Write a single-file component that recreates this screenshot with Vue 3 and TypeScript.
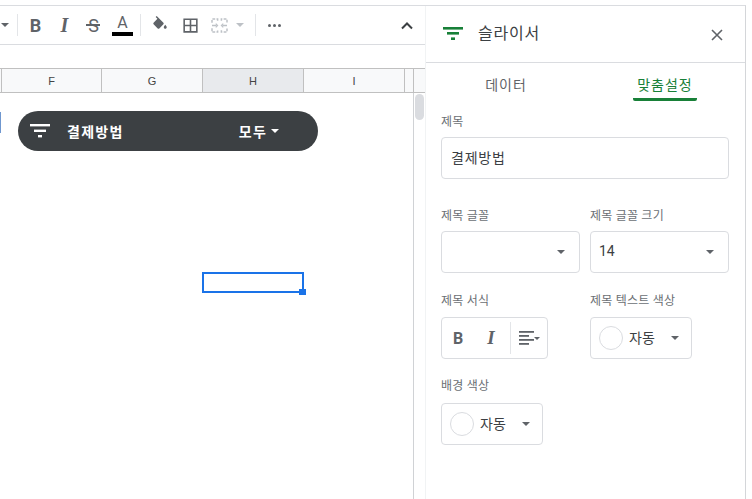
<script setup lang="ts">
const columns = [
  { name: 'F', width: 100, active: false },
  { name: 'G', width: 101, active: false },
  { name: 'H', width: 101, active: true },
  { name: 'I', width: 101, active: false },
]
const bucket =
  'M16.56 8.94 7.62 0 6.21 1.41l2.38 2.38-5.15 5.15c-.59.59-.59 1.54 0 2.12l5.5 5.5c.29.29.68.44 1.06.44s.77-.15 1.06-.44l5.5-5.5c.59-.58.59-1.53 0-2.11zM19 11.5s-2 2.17-2 3.5c0 1.1.9 2 2 2s2-.9 2-2c0-1.33-2-3.5-2-3.5z'
const grid4 = 'M3 3v18h18V3H3zm8 16H5v-6h6v6zm0-8H5V5h6v6zm8 8h-6v-6h6v6zm0-8h-6V5h6v6z'
</script>

<template>
  <div class="page">
    <div class="sheet">
      <div class="toolbar">
        <span class="caret first"></span>
        <span class="sep first-sep"></span>
        <span class="tool tool-b">B</span>
        <span class="tool tool-i">I</span>
        <span class="tool tool-s">S</span>
        <span class="tool tool-a"><span>A</span><i class="a-bar"></i></span>
        <span class="sep"></span>
        <span class="tool wide">
          <svg width="18" height="18" viewBox="0 0 24 24"><path :d="bucket" fill="#5f6368" /></svg>
        </span>
        <span class="tool wide">
          <svg width="19" height="19" viewBox="0 0 24 24"><path :d="grid4" fill="#5f6368" /></svg>
        </span>
        <span class="tool">
          <svg width="17" height="15" viewBox="0 0 18 16" fill="none" stroke="#bdc1c6" stroke-width="1.6">
            <path d="M1 5V1h6v2M11 3V1h6v4M1 11v4h6v-2M11 13v2h6v-4" stroke-dasharray="3 1.4" />
            <path d="M1 8h5M17 8h-5" />
            <path d="M5 6l2 2-2 2M13 6l-2 2 2 2" stroke-width="1.2" />
          </svg>
        </span>
        <span class="caret light"></span>
        <span class="sep merge-sep"></span>
        <span class="dots"><i></i><i></i><i></i></span>
        <svg class="chevron" width="14" height="9" viewBox="0 0 14 9" fill="none" stroke="#3c4043" stroke-width="2">
          <path d="M2 7.5 7 2.5l5 5" />
        </svg>
      </div>
      <div class="formula"></div>
      <div class="col-header">
        <span class="corner"></span>
        <span
          v-for="col in columns"
          :key="col.name"
          class="col"
          :class="{ active: col.active }"
          :style="{ width: col.width + 'px' }"
        >{{ col.name }}</span>
        <span class="col stub"></span>
      </div>
      <div class="body">
        <div class="cells">
          <i class="row-mark"></i>
          <div class="slicer">
            <svg width="20" height="14" viewBox="0 0 20 14" fill="#fff">
              <rect x="0" y="0" width="20" height="2.4" />
              <rect x="4" y="5.6" width="12" height="2.4" />
              <rect x="8" y="11" width="4" height="2.4" />
            </svg>
            <span class="slicer-title">결제방법</span>
            <span class="slicer-value">모두</span>
            <span class="caret white"></span>
          </div>
          <div class="selection"><i class="handle"></i></div>
        </div>
        <div class="scroll"><i class="thumb"></i></div>
      </div>
    </div>

    <aside class="panel">
      <header class="panel-head">
        <svg width="20" height="13" viewBox="0 0 20 13" fill="#188038">
          <rect x="0" y="0" width="20" height="2.6" />
          <rect x="4" y="5" width="12" height="2.6" />
          <rect x="8" y="10.4" width="4" height="2.6" />
        </svg>
        <span class="panel-title">슬라이서</span>
        <svg class="close" width="12" height="12" viewBox="0 0 12 12" stroke="#5f6368" stroke-width="1.6">
          <path d="M1 1l10 10M11 1 1 11" />
        </svg>
      </header>
      <nav class="tabs">
        <span class="tab">데이터</span>
        <span class="tab on">맞춤설정</span>
      </nav>
      <div class="form">
        <label class="lbl row-1">제목</label>
        <div class="field text-field"><span class="raised">결제방법</span></div>

        <div class="two row-2">
          <div>
            <label class="lbl">제목 글꼴</label>
            <div class="field select"><span></span><i class="caret"></i></div>
          </div>
          <div>
            <label class="lbl">제목 글꼴 크기</label>
            <div class="field select"><span class="num raised">14</span><i class="caret"></i></div>
          </div>
        </div>

        <div class="two row-3">
          <div>
            <label class="lbl">제목 서식</label>
            <div class="field fmt">
              <span class="fmt-b">B</span>
              <span class="fmt-i">I</span>
              <span class="fmt-sep"></span>
              <svg width="15" height="14" viewBox="0 0 15 14" fill="#5f6368">
                <rect x="0" y="0" width="15" height="1.8" />
                <rect x="0" y="4" width="10" height="1.8" />
                <rect x="0" y="8" width="15" height="1.8" />
                <rect x="0" y="12" width="10" height="1.8" />
              </svg>
              <i class="caret small"></i>
            </div>
          </div>
          <div>
            <label class="lbl">제목 텍스트 색상</label>
            <div class="field color">
              <span class="swatch"></span><span class="auto">자동</span><i class="caret"></i>
            </div>
          </div>
        </div>

        <label class="lbl row-4">배경 색상</label>
        <div class="field color">
          <span class="swatch"></span><span class="auto">자동</span><i class="caret"></i>
        </div>
      </div>
    </aside>
  </div>
</template>

<style>
html,
body {
  margin: 0;
  height: 499px;
  overflow: hidden;
  background: #fff;
}
</style>

<style scoped>
.page {
  display: flex;
  height: 494px;
  width: 746px;
  margin-top: 5px;
  border-top: 1px solid #dadce0;
  box-sizing: border-box;
  border-right: 1px solid #d4d6d9;
  font-family: 'Noto Sans CJK KR', 'Liberation Sans', sans-serif;
  color: #3c4043;
}
.sheet {
  width: 425px;
  flex: none;
  display: flex;
  flex-direction: column;
}
.toolbar {
  height: 38px;
  flex: none;
  display: flex;
  align-items: center;
  border-bottom: 1px solid #dadce0;
}
.caret {
  display: block;
  width: 0;
  height: 0;
  border-left: 4px solid transparent;
  border-right: 4px solid transparent;
  border-top: 4px solid #5f6368;
  flex: none;
}
.caret.first {
  margin-left: 1px;
}
.caret.light {
  margin-left: 2px;
  border-top-color: #bdc1c6;
}
.caret.white {
  border-top-color: #fff;
  margin-left: 4px;
}
.sep {
  width: 1px;
  height: 22px;
  background: #e3e5e8;
  margin: 0 4px 0 3px;
  flex: none;
}
.first-sep {
  margin: 0 3px 0 8px;
}
.merge-sep {
  margin-left: 11px;
}
.tool {
  width: 29px;
  height: 28px;
  display: flex;
  align-items: center;
  justify-content: center;
  flex: none;
  color: #5f6368;
  font: 700 18px 'Roboto', sans-serif;
}
.tool.wide {
  width: 30px;
}
.tool-i {
  font: italic 700 20px 'Liberation Serif', serif;
}
.tool-s {
  position: relative;
  font-weight: 400;
}
.tool-s::after {
  content: '';
  position: absolute;
  left: 7px;
  right: 8px;
  top: 13px;
  height: 2px;
  background: #5f6368;
}
.tool-a {
  flex-direction: column;
  font-weight: 400;
  font-size: 16px;
  line-height: 17px;
}
.a-bar {
  display: block;
  width: 21px;
  height: 4px;
  background: #000;
  margin-top: 1px;
}
.dots {
  display: flex;
  gap: 2px;
  margin-left: 8px;
}
.dots i {
  width: 3px;
  height: 3px;
  border-radius: 50%;
  background: #5f6368;
}
.chevron {
  margin-left: auto;
  margin-right: 11px;
}
.formula {
  height: 23px;
  flex: none;
}
.col-header {
  height: 25px;
  flex: none;
  box-sizing: border-box;
  display: flex;
  background: #f8f9fa;
  border-top: 1px solid #c0c0c0;
  border-bottom: 1px solid #c0c0c0;
}
.corner {
  width: 1px;
  flex: none;
}
.col {
  box-sizing: border-box;
  flex: none;
  display: flex;
  align-items: center;
  justify-content: center;
  border-left: 1px solid #c0c0c0;
  font: 11px 'Liberation Sans', sans-serif;
  color: #444;
}
.col.active {
  background: #e8eaed;
}
.col.stub {
  width: 10px;
  border-right: 1px solid #c0c0c0;
}
.body {
  flex: 1;
  display: flex;
  min-height: 0;
}
.cells {
  position: relative;
  width: 414px;
  box-sizing: border-box;
  border-right: 1px solid #d0d2d5;
}
.row-mark {
  position: absolute;
  left: 0;
  top: 19px;
  width: 1px;
  height: 21px;
  background: #6f97cf;
}
.slicer {
  position: absolute;
  left: 18px;
  top: 18px;
  width: 300px;
  height: 40px;
  box-sizing: border-box;
  padding-left: 12px;
  border-radius: 20px;
  background: #3c4043;
  display: flex;
  align-items: center;
  color: #fff;
  font-size: 14px;
  letter-spacing: 1.3px;
  font-weight: 700;
}
.slicer-title {
  margin-left: 17px;
}
.slicer-value {
  margin-left: 115px;
}
.selection {
  position: absolute;
  left: 202px;
  top: 179px;
  width: 102px;
  height: 21px;
  box-sizing: border-box;
  border: 2px solid #1a73e8;
}
.handle {
  position: absolute;
  right: -4px;
  bottom: -4px;
  width: 7px;
  height: 6px;
  background: #1a73e8;
}
.scroll {
  flex: 1;
  padding: 1px 1px 0 1px;
}
.thumb {
  display: block;
  width: 9px;
  height: 26px;
  border-radius: 5px;
  background: #dadce0;
}
.panel {
  flex: 1;
  box-sizing: border-box;
  border-left: 1px solid #f1f3f4;
  display: flex;
  flex-direction: column;
  min-width: 0;
}
.panel-head {
  height: 57px;
  flex: none;
  box-sizing: border-box;
  display: flex;
  align-items: center;
  padding: 0 22px 2px 17px;
  border-bottom: 1px solid #dadce0;
}
.panel-title {
  margin: -2px 0 0 15px;
  font-size: 16px;
  letter-spacing: 0.8px;
  color: #3c4043;
}
.close {
  margin-left: auto;
  margin-top: 3px;
}
.tabs {
  display: flex;
  height: 41px;
  flex: none;
  padding: 0 48px 0 15px;
  justify-content: space-between;
}
.tab {
  width: 64px;
  margin-left: 33px;
  box-sizing: border-box;
  text-align: center;
  padding-top: 11px;
  font-size: 14px;
  letter-spacing: 1px;
  line-height: 20px;
  color: #5f6368;
}
.tab.on {
  color: #188038;
  border-bottom: 3px solid #188038;
  border-radius: 0 0 2px 2px;
  height: 38px;
}
.form {
  padding: 0 16px 0 15px;
}
.lbl {
  display: block;
  font-size: 12px;
  letter-spacing: 0.3px;
  line-height: 18px;
  color: #6b6f74;
  margin: 0 0 7px;
}
.row-1 {
  margin: 8px 0 7px;
}
.row-2 {
  margin-top: 27px;
}
.row-3 {
  margin-top: 18px;
}
.row-3 .lbl {
  margin-bottom: 8px;
}
.row-4 {
  margin: 17px 0 9px;
}
.two {
  display: grid;
  grid-template-columns: 139px 139px;
  column-gap: 10px;
}
.field {
  box-sizing: border-box;
  height: 42px;
  border: 1px solid #dadce0;
  border-radius: 4px;
  display: flex;
  align-items: center;
  font-size: 14px;
  color: #3c4043;
  background: #fff;
}
.raised {
  padding-bottom: 2px;
}
.text-field {
  padding-left: 9px;
  letter-spacing: 0.8px;
}
.select {
  padding: 0 14px 0 8px;
  justify-content: space-between;
}
.num {
  font-family: 'Roboto', sans-serif;
}
.fmt {
  width: 107px;
  padding-left: 11px;
  color: #5f6368;
}
.fmt-b {
  font: 700 16px 'Roboto', sans-serif;
}
.fmt-i {
  font: italic 700 19px 'Liberation Serif', serif;
  margin-left: 24px;
}
.fmt-sep {
  width: 1px;
  height: 32px;
  background: #e3e5e8;
  margin: 0 8px 0 15px;
}
.caret.small {
  border-left-width: 3.5px;
  border-right-width: 3.5px;
  border-top-width: 3.5px;
}
.color {
  width: 102px;
  padding-left: 8px;
}
.swatch {
  width: 24px;
  height: 24px;
  box-sizing: border-box;
  border: 1px solid #dadce0;
  border-radius: 50%;
  flex: none;
}
.auto {
  margin-left: 6px;
  padding-bottom: 2px;
}
.color .caret {
  margin-left: 16px;
}
</style>
